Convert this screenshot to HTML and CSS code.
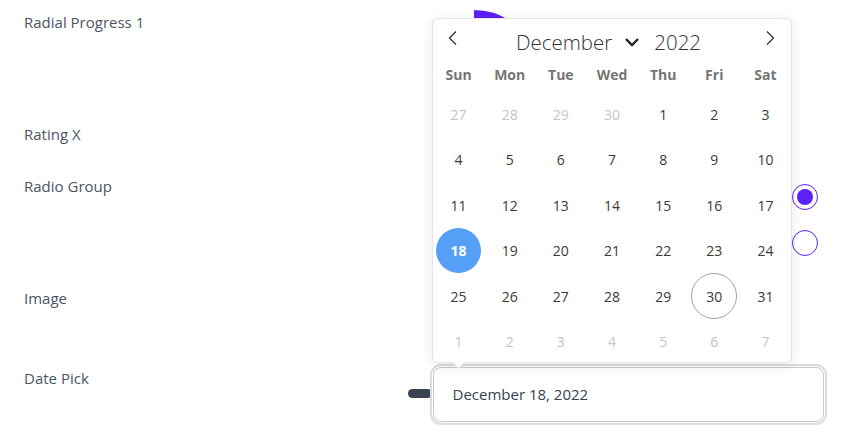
FILE: index.html
```html
<!DOCTYPE html>
<html lang="en">
<head>
<meta charset="utf-8">
<title>Form</title>
<link rel="stylesheet" href="styles.css">
</head>
<body>
<main class="form">
  <div class="row row-radial">
    <div class="label">Radial Progress 1</div>
    <div class="control">
      <svg class="radial" width="128" height="128" viewBox="0 0 128 128">
        <path d="M64 4 A60 60 0 0 1 124 64" fill="none" stroke="#5b21f6" stroke-width="8"/>
      </svg>
    </div>
  </div>
  <div class="row row-rating">
    <div class="label">Rating X</div>
    <div class="control"></div>
  </div>
  <div class="row row-radio">
    <div class="label">Radio Group</div>
    <div class="control radios">
      <span class="radio checked"></span>
      <span class="radio"></span>
    </div>
  </div>
  <div class="row row-image">
    <div class="label">Image</div>
    <div class="control"></div>
  </div>
  <div class="row row-date">
    <div class="label">Date Pick</div>
    <div class="control date-control">
      <span class="pill"></span>
      <div class="date-input">
        <span class="date-value">December 18, 2022</span>
        <div class="popup">
          <div class="cal-head">
            <span class="nav">
              <svg width="12" height="16" viewBox="0 0 12 16"><path d="M9 1.5 L2.5 8 L9 14.5" fill="none" stroke="#333" stroke-width="1.3"/></svg>
            </span>
            <div class="title">
              <span class="month">December</span>
              <svg class="chev" width="16" height="10" viewBox="0 0 16 10"><path d="M2 2 L8 8 L14 2" fill="none" stroke="#222" stroke-width="2.4"/></svg>
              <span class="year">2022</span>
            </div>
            <span class="nav">
              <svg width="12" height="16" viewBox="0 0 12 16"><path d="M3 1.5 L9.5 8 L3 14.5" fill="none" stroke="#333" stroke-width="1.3"/></svg>
            </span>
          </div>
          <div class="weekdays">
            <span>Sun</span><span>Mon</span><span>Tue</span><span>Wed</span><span>Thu</span><span>Fri</span><span>Sat</span>
          </div>
          <div class="days">
            <span class="day out">27</span><span class="day out">28</span><span class="day out">29</span><span class="day out">30</span><span class="day">1</span><span class="day">2</span><span class="day">3</span>
            <span class="day">4</span><span class="day">5</span><span class="day">6</span><span class="day">7</span><span class="day">8</span><span class="day">9</span><span class="day">10</span>
            <span class="day">11</span><span class="day">12</span><span class="day">13</span><span class="day">14</span><span class="day">15</span><span class="day">16</span><span class="day">17</span>
            <span class="day"><b class="sel">18</b></span><span class="day">19</span><span class="day">20</span><span class="day">21</span><span class="day">22</span><span class="day">23</span><span class="day">24</span>
            <span class="day">25</span><span class="day">26</span><span class="day">27</span><span class="day">28</span><span class="day">29</span><span class="day"><i class="today">30</i></span><span class="day">31</span>
            <span class="day out">1</span><span class="day out">2</span><span class="day out">3</span><span class="day out">4</span><span class="day out">5</span><span class="day out">6</span><span class="day out">7</span>
          </div>
          <span class="caret"></span>
        </div>
      </div>
    </div>
  </div>
</main>
</body>
</html>
```
FILE: styles.css
```css
* { box-sizing: border-box; }
html, body { margin: 0; padding: 0; background: #fff; }
body {
  font-family: "Open Sans", "Noto Sans", sans-serif;
  color: #4b5563;
  width: 841px;
  height: 438px;
  overflow: hidden;
}
.form {
  padding: 12px 0 0 24px;
}
.row {
  display: flex;
  align-items: flex-start;
}
.label {
  width: 384px;
  flex: none;
  font-size: 15px;
  line-height: 20px;
  color: #4b5563;
}
.control {
  flex: 1;
  min-width: 0;
}
.row-radial { height: 112px; }
.row-rating { height: 52px; }
.row-radio { height: 112px; }
.row-image { height: 80px; }
.row-date { height: 70px; }

.radial {
  display: block;
  margin: -2px 0 0 2px;
}

.radios {
  display: flex;
  flex-direction: column;
  gap: 20px;
  padding: 8px 0 0 384px;
}
.radio {
  width: 26px;
  height: 26px;
  border: 1.5px solid #5b21f6;
  border-radius: 50%;
  display: flex;
  align-items: center;
  justify-content: center;
  background: #fff;
}
.radio.checked::after {
  content: "";
  width: 16px;
  height: 16px;
  border-radius: 50%;
  background: #5b21f6;
}

.date-control {
  display: flex;
  align-items: flex-start;
}
.pill {
  width: 24px;
  height: 9px;
  margin-top: 21px;
  background: #3b4252;
  border-radius: 5px;
  flex: none;
}
.date-input {
  position: relative;
  margin: -1.5px 0 0 0.5px;
  width: 391px;
  height: 55px;
  border: 1px solid #c8c8ce;
  border-radius: 8px;
  box-shadow: 0 0 0 1px #fff, 0 0 0 3px #dcdce0;
  display: flex;
  align-items: center;
  padding-left: 19px;
  background: #fff;
}
.date-value {
  font-size: 15px;
  color: #374151;
}

.popup {
  position: absolute;
  left: -1.5px;
  bottom: calc(100% + 5px);
  width: 360px;
  height: 345px;
  background: #fff;
  border: 1px solid #e4e4e7;
  border-radius: 6px;
  box-shadow: 0 3px 14px rgba(0, 0, 0, 0.09);
  color: #333;
}
.cal-head {
  height: 42px;
  display: flex;
  align-items: center;
  justify-content: space-between;
  padding: 0 15px 0 14px;
}
.nav {
  width: 12px;
  height: 16px;
  display: flex;
  margin-top: -4px;
}
.title {
  display: flex;
  align-items: center;
  margin-top: 5px;
  margin-right: 6px;
  font-size: 20.5px;
  font-weight: 300;
  color: #333;
  line-height: 28px;
}
.chev {
  margin: 0 14px 0 12px;
}
.weekdays {
  height: 28px;
  display: grid;
  grid-template-columns: repeat(7, 1fr);
  align-items: center;
  text-align: center;
  font-size: 14px;
  font-weight: 700;
  color: #757575;
}
.days {
  display: grid;
  grid-template-columns: repeat(7, 1fr);
  grid-auto-rows: 45.5px;
  padding-top: 3px;
}
.day {
  display: flex;
  align-items: center;
  justify-content: center;
  font-size: 14px;
  color: #3a3a3a;
}
.day.out { color: #c4c4c4; }
.sel, .today {
  width: 45px;
  height: 45px;
  border-radius: 50%;
  display: flex;
  align-items: center;
  justify-content: center;
  font-style: normal;
}
.sel {
  background: #569ff7;
  color: #fff;
  font-weight: 700;
}
.today {
  border: 1px solid #9aa0ab;
  width: 46px;
  height: 46px;
}
.caret {
  position: absolute;
  left: 21px;
  bottom: -5px;
  width: 9px;
  height: 9px;
  background: #fff;
  border-right: 1px solid #e4e4e7;
  border-bottom: 1px solid #e4e4e7;
  transform: rotate(45deg);
}
```
